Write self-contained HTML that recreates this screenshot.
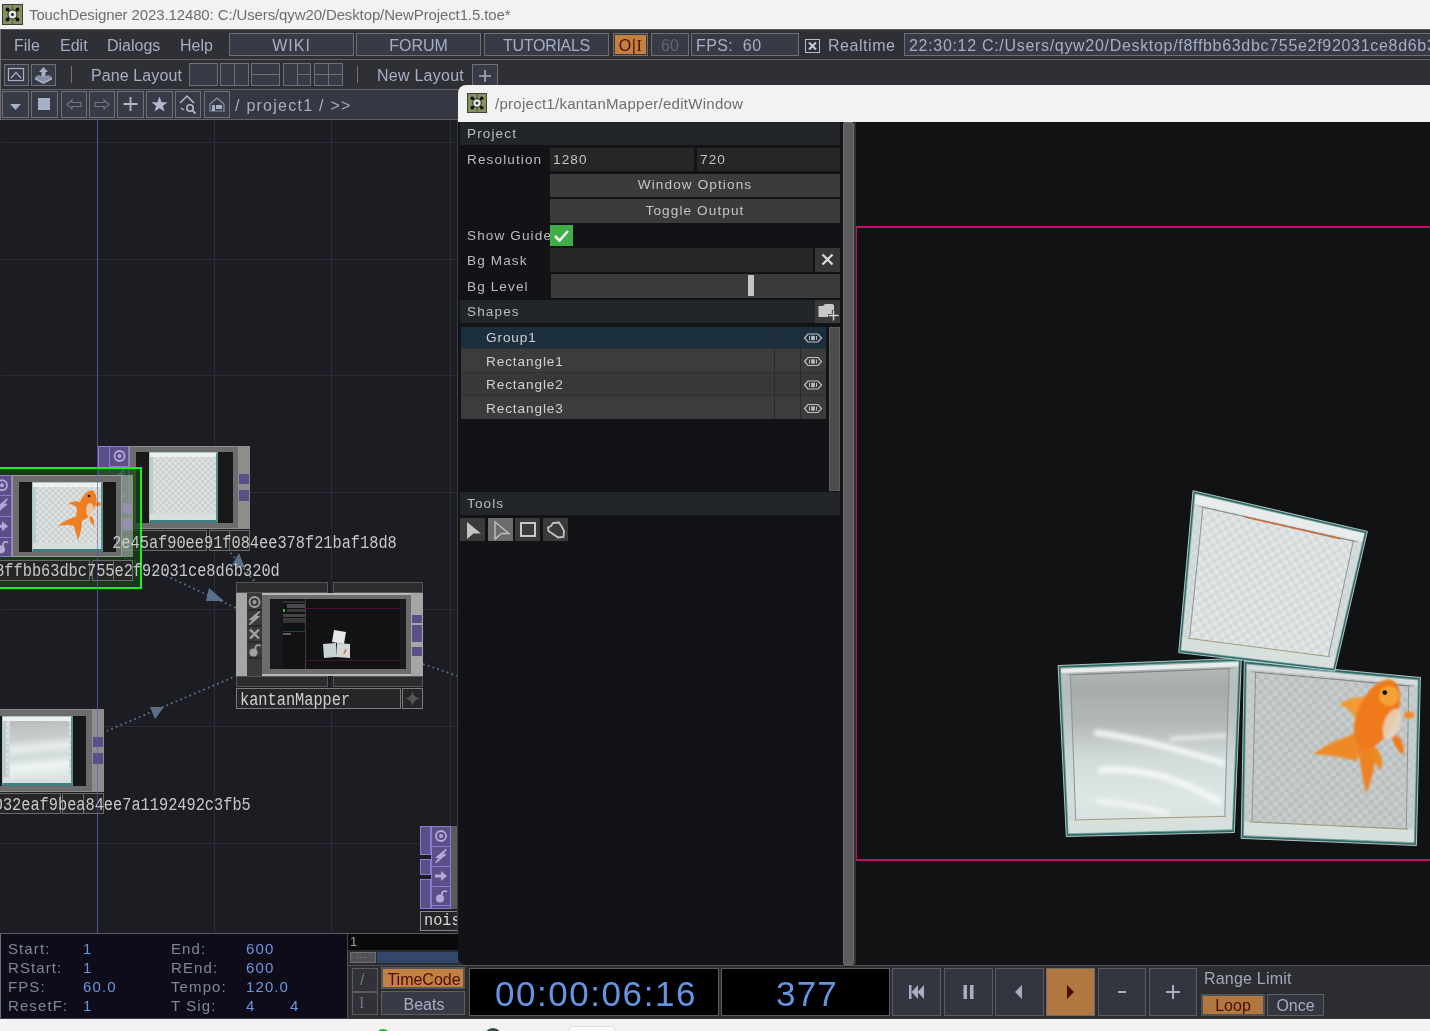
<!DOCTYPE html>
<html><head><meta charset="utf-8">
<style>
*{box-sizing:border-box;margin:0;padding:0}
html,body{width:1430px;height:1031px;overflow:hidden;background:#f2f2f2;font-family:"Liberation Sans",sans-serif}
.a{position:absolute}
.t{position:absolute;white-space:nowrap;line-height:1;will-change:transform}
.btn{position:absolute;background:#383b46;border:1px solid #6e7074}
.mono{font-family:"Liberation Mono",monospace}
.m{font-size:16px;color:#a6aec4}
.p{font-size:13.6px;letter-spacing:1.1px;color:#bcbcbc}
</style></head><body>
<!-- title bar -->
<svg class="a" style="left:2px;top:4px" width="21" height="21" viewBox="0 0 21 21">
<rect x="0.5" y="0.5" width="20" height="20" fill="#84925f" stroke="#3a3e32"/>
<rect x="9.75" y="1" width="1.5" height="19" fill="#5e6a44"/>
<path d="M5.5 5.5L15.5 15.5M15.5 5.5L5.5 15.5" stroke="#141810" stroke-width="1.6"/>
<circle cx="5.5" cy="5.5" r="1.9" fill="#0e100c"/><circle cx="15.5" cy="5.5" r="1.9" fill="#0e100c"/><circle cx="5.5" cy="15.5" r="1.9" fill="#0e100c"/><circle cx="15.5" cy="15.5" r="1.9" fill="#0e100c"/>
<circle cx="10.5" cy="10.5" r="5" fill="#2a3020"/><circle cx="10.5" cy="10.5" r="3.9" fill="#e8e8e8"/><circle cx="10.5" cy="10.5" r="1.6" fill="#333"/>
</svg>
<div class="t" style="left:29px;top:7px;font-size:15px;letter-spacing:-0.12px;color:#6e6e6e">TouchDesigner 2023.12480: C:/Users/qyw20/Desktop/NewProject1.5.toe*</div>

<!-- main dark area -->
<div class="a" style="left:0;top:29px;width:1430px;height:990px;background:#2e3035;border-top:1px solid #5a5c60;border-left:1px solid #707074;border-bottom:1px solid #505256"></div>
<!-- row1 menu -->
<div class="t m" style="left:14px;top:38px">File</div>
<div class="t m" style="left:60px;top:38px">Edit</div>
<div class="t m" style="left:107px;top:38px">Dialogs</div>
<div class="t m" style="left:180px;top:38px">Help</div>
<div class="btn" style="left:229px;top:33px;width:125px;height:23px"></div>
<div class="t m" style="left:229px;top:38px;width:125px;text-align:center;letter-spacing:1px">WIKI</div>
<div class="btn" style="left:356px;top:33px;width:125px;height:23px"></div>
<div class="t m" style="left:356px;top:38px;width:125px;text-align:center">FORUM</div>
<div class="btn" style="left:484px;top:33px;width:125px;height:23px"></div>
<div class="t m" style="left:484px;top:38px;width:125px;text-align:center;letter-spacing:-0.3px">TUTORIALS</div>
<div class="btn" style="left:613px;top:33px;width:35px;height:23px"></div>
<div class="a" style="left:615px;top:35px;width:31px;height:19px;background:#c4803f"></div>
<div class="t m" style="left:613px;top:38px;width:35px;text-align:center;color:#4a0e08;letter-spacing:0.5px">O|<span style="font-family:'Liberation Serif',serif">I</span></div>
<div class="btn" style="left:651px;top:33px;width:38px;height:23px"></div>
<div class="t m" style="left:651px;top:38px;width:38px;text-align:center;color:#60646e">60</div>
<div class="btn" style="left:691px;top:33px;width:108px;height:23px"></div>
<div class="t m" style="left:696px;top:38px;letter-spacing:0.4px">FPS:&nbsp;&nbsp;60</div>
<div class="a" style="left:805px;top:39px;width:15px;height:14px;border:1px solid #b8bccc"></div>
<svg class="a" style="left:805px;top:39px" width="15" height="14"><path d="M4 3.5L11 10.5M11 3.5L4 10.5" stroke="#c8ccd8" stroke-width="2"/></svg>
<div class="t m" style="left:828px;top:38px;letter-spacing:0.55px">Realtime</div>
<div class="btn" style="left:904px;top:33px;width:540px;height:23px"></div>
<div class="t m" style="left:909px;top:38px;letter-spacing:0.69px">22:30:12 C:/Users/qyw20/Desktop/f8ffbb63dbc755e2f92031ce8d6b320d</div>
<div class="a" style="left:1px;top:59px;width:1429px;height:1px;background:#606266"></div>

<!-- row2 -->
<div class="btn" style="left:4px;top:64px;width:25px;height:22px"></div>
<svg class="a" style="left:4px;top:64px" width="25" height="22"><rect x="4.5" y="4.5" width="15" height="12" fill="none" stroke="#a6aec4" stroke-width="1.2"/><path d="M7 14L12 8.5L17 14" fill="none" stroke="#a6aec4" stroke-width="1.2"/></svg>
<div class="btn" style="left:31px;top:64px;width:25px;height:22px"></div>
<svg class="a" style="left:31px;top:64px" width="25" height="22"><path d="M4 13L12.5 17.5L21 13L21 15.5L12.5 20L4 15.5Z" fill="#a6aec4"/><path d="M4 13L8 11L12.5 13.5L17 11L21 13L12.5 17.5Z" fill="#8890a6"/><path d="M12.5 3L17 8H14.5V13H10.5V8H8Z" fill="#a6aec4"/></svg>
<div class="a" style="left:71px;top:66px;width:1px;height:17px;background:#70747c"></div>
<div class="t m" style="left:91px;top:68px;letter-spacing:0.1px">Pane Layout</div>
<div class="btn" style="left:189px;top:63px;width:29px;height:23px"></div>
<div class="btn" style="left:220px;top:63px;width:29px;height:23px"></div>
<div class="a" style="left:234px;top:63px;width:1px;height:23px;background:#6e7074"></div>
<div class="btn" style="left:251px;top:63px;width:29px;height:23px"></div>
<div class="a" style="left:251px;top:74px;width:29px;height:1px;background:#6e7074"></div>
<div class="btn" style="left:283px;top:63px;width:28px;height:23px"></div>
<div class="a" style="left:297px;top:63px;width:1px;height:23px;background:#6e7074"></div>
<div class="a" style="left:297px;top:74px;width:14px;height:1px;background:#6e7074"></div>
<div class="btn" style="left:314px;top:63px;width:29px;height:23px"></div>
<div class="a" style="left:328px;top:63px;width:1px;height:23px;background:#6e7074"></div>
<div class="a" style="left:314px;top:74px;width:29px;height:1px;background:#6e7074"></div>
<div class="a" style="left:357px;top:66px;width:1px;height:17px;background:#70747c"></div>
<div class="t m" style="left:377px;top:68px;letter-spacing:0.25px">New Layout</div>
<div class="btn" style="left:472px;top:64px;width:26px;height:24px"></div>
<svg class="a" style="left:472px;top:64px" width="26" height="24"><path d="M13 6V18M7 12H19" stroke="#a6aec4" stroke-width="1.6"/></svg>
<div class="a" style="left:1px;top:89px;width:1429px;height:1px;background:#606266"></div>
<!-- row3 -->
<div class="a" style="left:1px;top:90px;width:1429px;height:29px;background:#353842"></div>
<div class="btn" style="left:2px;top:91px;width:27px;height:27px"></div>
<svg class="a" style="left:2px;top:91px" width="27" height="27"><path d="M8 13H19L13.5 19Z" fill="#a6b0c8"/></svg>
<div class="btn" style="left:31px;top:91px;width:27px;height:27px"></div>
<div class="a" style="left:38px;top:98px;width:12px;height:12px;background:#a6b0c8"></div>
<div class="btn" style="left:61px;top:91px;width:26px;height:27px"></div>
<svg class="a" style="left:61px;top:91px" width="26" height="27"><path d="M6 13.5L11 9V11.5H20V15.5H11V18Z" fill="none" stroke="#6e7488" stroke-width="1.2"/></svg>
<div class="btn" style="left:89px;top:91px;width:26px;height:27px"></div>
<svg class="a" style="left:89px;top:91px" width="26" height="27"><path d="M20 13.5L15 9V11.5H6V15.5H15V18Z" fill="none" stroke="#6e7488" stroke-width="1.2"/></svg>
<div class="btn" style="left:117px;top:91px;width:27px;height:27px"></div>
<svg class="a" style="left:117px;top:91px" width="27" height="27"><path d="M13.5 6V20M6.5 13H20.5" stroke="#b0b8cc" stroke-width="1.8"/></svg>
<div class="btn" style="left:146px;top:91px;width:27px;height:27px"></div>
<svg class="a" style="left:146px;top:91px" width="27" height="27"><path d="M13.5 5.5L15.6 11.2L21.5 11.3L16.8 14.9L18.5 20.5L13.5 17.2L8.5 20.5L10.2 14.9L5.5 11.3L11.4 11.2Z" fill="#b0b8cc"/></svg>
<div class="btn" style="left:175px;top:91px;width:26px;height:27px"></div>
<svg class="a" style="left:175px;top:91px" width="26" height="27"><path d="M5 12L12 5L19 12" fill="none" stroke="#b0b8cc" stroke-width="1.5"/><path d="M6 17L9 19" stroke="#b0b8cc" stroke-width="1.5"/><circle cx="15" cy="17" r="3.2" fill="none" stroke="#b0b8cc" stroke-width="1.6"/><path d="M17.3 19.3L20.5 22.5" stroke="#b0b8cc" stroke-width="1.8"/></svg>
<div class="btn" style="left:204px;top:91px;width:26px;height:27px"></div>
<svg class="a" style="left:204px;top:91px" width="26" height="27"><path d="M6 13L13 7L20 13V20H6Z" fill="none" stroke="#8a90a4" stroke-width="1.2"/><rect x="12" y="14" width="6" height="4" fill="#a6aec4"/><rect x="8" y="14" width="3" height="6" fill="#a6aec4"/></svg>
<div class="t m" style="left:235px;top:98px;letter-spacing:1.25px">/ project1 / &gt;&gt;</div>
<div class="a" style="left:1px;top:119px;width:1429px;height:1px;background:#606266"></div>
<div class="a" style="left:0;top:0;width:458px;height:933px;overflow:hidden">
<div class="a" style="left:0px;top:120px;width:458px;height:813px;background:#1c1d22"></div>
<div class="a" style="left:214px;top:120px;width:1px;height:813px;background:#2b2c37"></div>
<div class="a" style="left:331px;top:120px;width:1px;height:813px;background:#2b2c37"></div>
<div class="a" style="left:450px;top:120px;width:1px;height:813px;background:#2b2c37"></div>
<div class="a" style="left:1px;top:142px;width:457px;height:1px;background:#2b2c37"></div>
<div class="a" style="left:1px;top:259px;width:457px;height:1px;background:#2b2c37"></div>
<div class="a" style="left:1px;top:375px;width:457px;height:1px;background:#2b2c37"></div>
<div class="a" style="left:1px;top:492px;width:457px;height:1px;background:#2b2c37"></div>
<div class="a" style="left:1px;top:609px;width:457px;height:1px;background:#2b2c37"></div>
<div class="a" style="left:1px;top:726px;width:457px;height:1px;background:#2b2c37"></div>
<div class="a" style="left:1px;top:843px;width:457px;height:1px;background:#2b2c37"></div>
<div class="a" style="left:97px;top:120px;width:1px;height:813px;background:#45457a"></div>
<svg class="a" style="left:0;top:0" width="458" height="933">
<g stroke="#5a7088" stroke-width="1.8" stroke-dasharray="1.8 3.2" fill="none">
<path d="M125 557L236 608"/>
<path d="M208 526L262 590"/>
<path d="M102 733L236 676"/>
<path d="M423 664L458 676"/>
</g>
<g fill="#5a7088">
<path d="M209 588L224 601L206 601Z"/>
<path d="M239 553L245 568L232 565Z"/>
<path d="M150 707L164 707L155 719Z"/>
</g>
</svg>
<div class="a" style="left:-10px;top:709px;width:114px;height:83px;background:#6c6c6c;border:1px solid #8a8a8a"></div>
<div class="a" style="left:-10px;top:716px;width:96px;height:70px;background:#181818"></div>
<div class="a" style="left:2px;top:716px;width:71px;height:70px;background:repeating-conic-gradient(#dde1e1 0 25%, #ccd1d1 0 50%) 0 0/6px 6px;border:1px solid #a8c8c8;border-bottom:3px solid #3f7f7f;border-right:2px solid #5a9090;box-shadow:inset 0 4px 0 #eef0f0, inset 0 -6px 0 #d8dede, inset 3px 0 0 #c0cccc"></div>
<div class="a" style="left:10px;top:721px;width:59px;height:58px;background:linear-gradient(175deg,#b8bcbc 0%,#c8cccc 30%,#e6ecec 45%,#d2dada 60%,#eef4f4 75%,#d8e0e0 100%)"></div>
<div class="a" style="left:92px;top:709px;width:12px;height:83px;background:#8e8e8e"></div>
<div class="a" style="left:93px;top:737px;width:10px;height:10px;background:#5c4f88"></div>
<div class="a" style="left:93px;top:753px;width:10px;height:11px;background:#5c4f88"></div>
<div class="a" style="left:-10px;top:793px;width:71px;height:21px;background:#262628;border:1px solid #6a6a6a"></div>
<div class="a" style="left:62px;top:793px;width:42px;height:21px;background:#262628;border:1px solid #6a6a6a"></div>
<div class="a" style="left:83px;top:793px;width:1px;height:21px;background:#6a6a6a"></div>
<div class="t" style="left:-43px;top:797px;font-family:'Liberation Mono',monospace;font-size:15.3px;color:#c8c8c8;transform:scaleY(1.18);transform-origin:0 0">d6f9032eaf9bea84ee7a1192492c3fb5</div>
<div class="a" style="left:98px;top:446px;width:31px;height:83px;background:#5c4f88;border:1px solid #8c7ad8"></div>
<div class="a" style="left:109px;top:446px;width:1px;height:83px;background:#8c7ad8"></div>
<div class="a" style="left:109px;top:466px;width:20px;height:1px;background:#8c7ad8"></div>
<div class="a" style="left:109px;top:486px;width:20px;height:1px;background:#8c7ad8"></div>
<div class="a" style="left:109px;top:506px;width:20px;height:1px;background:#8c7ad8"></div>
<svg class="a" style="left:110px;top:446px" width="19" height="80"><circle cx="9.5" cy="10.0" r="5" fill="none" stroke="#b4a8d8" stroke-width="1.8"/><circle cx="9.5" cy="10.0" r="2" fill="#b4a8d8"/><path d="M14.5 23.5L5.0 31.5L9.0 31.0L4.5 36.5L14.0 28.5L10.0 29.0Z" fill="#b4a8d8" stroke="#b4a8d8" stroke-width="1.4" stroke-linejoin="round"/><path d="M3.5 48.5H9.5V45.0L15.5 50.0L9.5 55.0V51.5H3.5Z" fill="#b4a8d8"/><circle cx="8.5" cy="72.5" r="4" fill="#b4a8d8"/><path d="M10.5 69.0V67.0A3 3 0 0 1 15.5 66.0" fill="none" stroke="#b4a8d8" stroke-width="1.8"/></svg>
<div class="a" style="left:129px;top:446px;width:121px;height:83px;background:#6c6c6c;border:1px solid #909090"></div>
<div class="a" style="left:136px;top:452px;width:97px;height:71px;background:#181818"></div>
<div class="a" style="left:149px;top:452px;width:69px;height:71px;background:repeating-conic-gradient(#dde1e1 0 25%, #ccd1d1 0 50%) 0 0/6px 6px;border:1px solid #a8c8c8;border-bottom:3px solid #3f7f7f;border-right:2px solid #5a9090;box-shadow:inset 0 4px 0 #eef0f0, inset 0 -6px 0 #d8dede, inset 3px 0 0 #c0cccc"></div>
<div class="a" style="left:238px;top:446px;width:12px;height:83px;background:#8e8e8e"></div>
<div class="a" style="left:239px;top:474px;width:10px;height:10px;background:#5c4f88"></div>
<div class="a" style="left:239px;top:490px;width:10px;height:11px;background:#5c4f88"></div>
<div class="a" style="left:119px;top:530px;width:88px;height:21px;background:#262628;border:1px solid #6a6a6a"></div>
<div class="a" style="left:209px;top:530px;width:41px;height:21px;background:#262628;border:1px solid #6a6a6a"></div>
<div class="a" style="left:229px;top:530px;width:1px;height:21px;background:#6a6a6a"></div>
<div class="a" style="left:-10px;top:467px;width:152px;height:122px;background:rgba(20,70,20,0.7);border:2px solid #1cf01c"></div>
<div class="a" style="left:-5px;top:475px;width:17px;height:82px;background:#5c4f88;border:1px solid #8c7ad8"></div>
<div class="a" style="left:-5px;top:495px;width:17px;height:1px;background:#8c7ad8"></div>
<div class="a" style="left:-5px;top:516px;width:17px;height:1px;background:#8c7ad8"></div>
<div class="a" style="left:-5px;top:537px;width:17px;height:1px;background:#8c7ad8"></div>
<svg class="a" style="left:-8px;top:475px" width="20" height="82.0"><circle cx="10.0" cy="10.25" r="5" fill="none" stroke="#b4a8d8" stroke-width="1.8"/><circle cx="10.0" cy="10.25" r="2" fill="#b4a8d8"/><path d="M15.0 24.25L5.5 32.25L9.5 31.75L5.0 37.25L14.5 29.25L10.5 29.75Z" fill="#b4a8d8" stroke="#b4a8d8" stroke-width="1.4" stroke-linejoin="round"/><path d="M4.0 49.75H10.0V46.25L16.0 51.25L10.0 56.25V52.75H4.0Z" fill="#b4a8d8"/><circle cx="9.0" cy="74.25" r="4" fill="#b4a8d8"/><path d="M11.0 70.75V68.75A3 3 0 0 1 16.0 67.75" fill="none" stroke="#b4a8d8" stroke-width="1.8"/></svg>
<div class="a" style="left:12px;top:475px;width:110px;height:82px;background:#6c6c6c;border:1px solid #9a9a9a"></div>
<div class="a" style="left:19px;top:482px;width:97px;height:70px;background:#181818"></div>
<div class="a" style="left:32px;top:482px;width:71px;height:70px;background:repeating-conic-gradient(#dde1e1 0 25%, #ccd1d1 0 50%) 0 0/6px 6px;border:1px solid #a8c8c8;border-bottom:3px solid #3f7f7f;border-right:2px solid #5a9090;box-shadow:inset 0 4px 0 #eef0f0, inset 0 -6px 0 #d8dede, inset 3px 0 0 #c0cccc"></div>
<svg class="a" style="left:32px;top:482px" width="71" height="70"><g fill="#ee7e20"><path d="M60 8Q66 12 64 22Q60 34 52 38Q46 40 44 36Q44 26 50 16Q54 9 60 8Z"/><path d="M46 34Q36 36 26 44Q36 42 42 44Q44 52 46 58Q50 48 50 38Z"/><path d="M48 20Q42 18 36 22Q44 22 46 28Z"/><path d="M60 34Q63 40 62 44Q58 40 57 35Z"/></g><ellipse cx="58" cy="28" rx="4" ry="7" fill="#ead8c0" opacity="0.8"/><ellipse cx="66" cy="22" rx="3" ry="2" fill="#ee8a24"/><circle cx="57" cy="14" r="1.3" fill="#111"/></svg>
<div class="a" style="left:-5px;top:560px;width:95px;height:21px;background:#262628;border:1px solid #6a6a6a"></div>
<div class="a" style="left:92px;top:560px;width:41px;height:21px;background:#262628;border:1px solid #6a6a6a"></div>
<div class="a" style="left:113px;top:560px;width:1px;height:21px;background:#6a6a6a"></div>
<div class="t" style="left:-14px;top:563px;font-family:'Liberation Mono',monospace;font-size:15.3px;color:#c8c8c8;transform:scaleY(1.18);transform-origin:0 0">f8ffbb63dbc755e2f92031ce8d6b320d</div>
<div class="a" style="left:113px;top:530px;width:300px;height:22px;overflow:hidden">
<div class="t" style="left:-10px;top:5px;font-family:'Liberation Mono',monospace;font-size:15.3px;color:#c8c8c8;transform:scaleY(1.18);transform-origin:0 0">e2e45af90ee91f084ee378f21baf18d8</div>
</div>
<div class="a" style="left:123px;top:503px;width:9px;height:10px;background:#5c4f88"></div>
<div class="a" style="left:123px;top:518px;width:9px;height:12px;background:#5c4f88"></div>
<div class="a" style="left:122px;top:475px;width:11px;height:82px;background:rgba(210,210,210,0.5)"></div>
<div class="a" style="left:236px;top:582px;width:92px;height:11px;background:#2c2c2e;border:1px solid #555"></div>
<div class="a" style="left:333px;top:582px;width:90px;height:11px;background:#2c2c2e;border:1px solid #555"></div>
<div class="a" style="left:236px;top:593px;width:187px;height:83px;background:#a6a6a6"></div>
<div class="a" style="left:247px;top:593px;width:15px;height:83px;background:#3a3a3c"></div>
<svg class="a" style="left:247px;top:594px" width="15" height="64"><circle cx="7.5" cy="8.0" r="5" fill="none" stroke="#a0a0a0" stroke-width="1.8"/><circle cx="7.5" cy="8.0" r="2" fill="#a0a0a0"/><path d="M12.5 17.5L3.0 25.5L7.0 25.0L2.5 30.5L12.0 22.5L8.0 23.0Z" fill="#a0a0a0" stroke="#a0a0a0" stroke-width="1.4" stroke-linejoin="round"/><path d="M3.0 35.5L12.0 44.5M12.0 35.5L3.0 44.5" stroke="#a0a0a0" stroke-width="2.4"/><circle cx="6.5" cy="58.5" r="4" fill="#a0a0a0"/><path d="M8.5 55.0V53.0A3 3 0 0 1 13.5 52.0" fill="none" stroke="#a0a0a0" stroke-width="1.8"/></svg>
<div class="a" style="left:247px;top:609px;width:15px;height:2px;background:#2a2a2c"></div>
<div class="a" style="left:247px;top:625px;width:15px;height:2px;background:#2a2a2c"></div>
<div class="a" style="left:247px;top:641px;width:15px;height:2px;background:#2a2a2c"></div>
<div class="a" style="left:247px;top:657px;width:15px;height:2px;background:#2a2a2c"></div>
<div class="a" style="left:262px;top:593px;width:149px;height:83px;background:#6c6c6c;border-top:2px solid #b8b8b8;border-bottom:2px solid #b8b8b8"></div>
<div class="a" style="left:270px;top:599px;width:136px;height:70px;background:#111214"></div>
<div class="a" style="left:270px;top:599px;width:13px;height:70px;background:#17181b"></div>
<div class="a" style="left:283px;top:601px;width:22px;height:2px;background:#2e2f33"></div>
<div class="a" style="left:287px;top:604px;width:18px;height:4px;background:#4a4a4c"></div>
<div class="a" style="left:283px;top:609px;width:2px;height:3px;background:#3cb043"></div>
<div class="a" style="left:287px;top:609px;width:18px;height:3px;background:#3a3a3c"></div>
<div class="a" style="left:283px;top:614px;width:22px;height:3px;background:#444446"></div>
<div class="a" style="left:283px;top:618px;width:22px;height:3px;background:#3a3a3c"></div>
<div class="a" style="left:283px;top:621px;width:22px;height:2px;background:#333336"></div>
<div class="a" style="left:283px;top:631px;width:22px;height:1px;background:#2a3a44"></div>
<div class="a" style="left:283px;top:633px;width:8px;height:2px;background:#5a5a5a"></div>
<div class="a" style="left:305px;top:599px;width:1px;height:70px;background:#3c3c3e"></div>
<div class="a" style="left:306px;top:608px;width:94px;height:1px;background:#4a1038"></div>
<div class="a" style="left:306px;top:660px;width:94px;height:1px;background:#4a1038"></div>
<div class="a" style="left:400px;top:599px;width:6px;height:70px;background:#1a1b1d"></div>
<svg class="a" style="left:306px;top:599px" width="94" height="70"><polygon points="28,31 40,33 38,45 26,43" fill="#e4e8e8"/><polygon points="17,45 30,44 30,58 18,59" fill="#c8d2d2"/><polygon points="31,44 44,45 44,59 30,58" fill="#d4d8d8"/><path d="M40 50L38 55" stroke="#e07020" stroke-width="1.5"/></svg>
<div class="a" style="left:411px;top:593px;width:12px;height:83px;background:#a6a6a6"></div>
<div class="a" style="left:412px;top:615px;width:10px;height:8px;background:#5c4f88"></div>
<div class="a" style="left:412px;top:625px;width:10px;height:17px;background:#5c4f88"></div>
<div class="a" style="left:412px;top:647px;width:10px;height:9px;background:#5c4f88"></div>
<div class="a" style="left:236px;top:676px;width:92px;height:11px;background:#2c2c2e;border:1px solid #555"></div>
<div class="a" style="left:333px;top:676px;width:90px;height:11px;background:#2c2c2e;border:1px solid #555"></div>
<div class="a" style="left:236px;top:688px;width:165px;height:21px;background:#262628;border:1px solid #7a7a7a"></div>
<div class="a" style="left:402px;top:688px;width:21px;height:21px;background:#262628;border:1px solid #7a7a7a"></div>
<svg class="a" style="left:402px;top:688px" width="21" height="21"><path d="M10.5 3Q11.5 9.5 18 10.5Q11.5 11.5 10.5 18Q9.5 11.5 3 10.5Q9.5 9.5 10.5 3Z" fill="#555"/></svg>
<div class="t" style="left:240px;top:692px;font-family:'Liberation Mono',monospace;font-size:15.3px;color:#d0d0d0;transform:scaleY(1.18);transform-origin:0 0">kantanMapper</div>
<div class="a" style="left:420px;top:826px;width:11px;height:29px;background:#5c4f88;border:1px solid #8c7ad8"></div>
<div class="a" style="left:420px;top:859px;width:11px;height:16px;background:#5c4f88;border:1px solid #8c7ad8"></div>
<div class="a" style="left:420px;top:879px;width:11px;height:30px;background:#5c4f88;border:1px solid #8c7ad8"></div>
<div class="a" style="left:431px;top:826px;width:20px;height:83px;background:#5c4f88;border:1px solid #8c7ad8"></div>
<div class="a" style="left:431px;top:846px;width:20px;height:1px;background:#8c7ad8"></div>
<div class="a" style="left:431px;top:866px;width:20px;height:1px;background:#8c7ad8"></div>
<div class="a" style="left:431px;top:886px;width:20px;height:1px;background:#8c7ad8"></div>
<div class="a" style="left:431px;top:905px;width:20px;height:1px;background:#8c7ad8"></div>
<svg class="a" style="left:432px;top:826px" width="18" height="80"><circle cx="9.0" cy="10.0" r="5" fill="none" stroke="#b4a8d8" stroke-width="1.8"/><circle cx="9.0" cy="10.0" r="2" fill="#b4a8d8"/><path d="M14.0 23.5L4.5 31.5L8.5 31.0L4.0 36.5L13.5 28.5L9.5 29.0Z" fill="#b4a8d8" stroke="#b4a8d8" stroke-width="1.4" stroke-linejoin="round"/><path d="M3.0 48.5H9.0V45.0L15.0 50.0L9.0 55.0V51.5H3.0Z" fill="#b4a8d8"/><circle cx="8.0" cy="72.5" r="4" fill="#b4a8d8"/><path d="M10.0 69.0V67.0A3 3 0 0 1 15.0 66.0" fill="none" stroke="#b4a8d8" stroke-width="1.8"/></svg>
<div class="a" style="left:451px;top:826px;width:8px;height:83px;background:#5a5a5a"></div>
<div class="a" style="left:420px;top:911px;width:45px;height:20px;background:#262628;border:1px solid #8a8a8a"></div>
<div class="t" style="left:424px;top:913px;font-family:'Liberation Mono',monospace;font-size:15.3px;color:#d8d8d8;transform:scaleY(1.1);transform-origin:0 0">noise1</div>
<div class="a" style="left:97px;top:120px;width:1px;height:813px;background:rgba(90,90,170,0.55)"></div>
<div class="a" style="left:457px;top:120px;width:1px;height:813px;background:#3c3d42"></div>
</div><!-- timeline -->
<div class="a" style="left:0;top:933px;width:460px;height:1px;background:#5a5c60"></div>
<div class="a" style="left:1px;top:934px;width:346px;height:84px;background:#0d0c18"></div>
<div class="t" style="left:8px;top:939px;font-size:15px;letter-spacing:1.1px;color:#7e8898;line-height:19px">Start:<br>RStart:<br>FPS:<br>ResetF:</div>
<div class="t" style="left:83px;top:939px;font-size:15px;letter-spacing:1.1px;color:#6e96e0;line-height:19px">1<br>1<br>60.0<br>1</div>
<div class="t" style="left:171px;top:939px;font-size:15px;letter-spacing:1.1px;color:#7e8898;line-height:19px">End:<br>REnd:<br>Tempo:<br>T Sig:</div>
<div class="t" style="left:246px;top:939px;font-size:15px;letter-spacing:1.1px;color:#6e96e0;line-height:19px">600<br>600<br>120.0<br>4</div>
<div class="t" style="left:290px;top:996px;font-size:15px;letter-spacing:1.1px;color:#6e96e0;line-height:19px">4</div>
<div class="a" style="left:347px;top:934px;width:111px;height:16px;background:#0a0a0a;border-left:1px solid #444"></div>
<div class="t" style="left:350px;top:935px;font-size:13px;color:#a0a0a0">1</div>
<div class="a" style="left:347px;top:950px;width:111px;height:15px;background:#2a2b30;border-left:1px solid #555"></div>
<div class="a" style="left:350px;top:952px;width:26px;height:11px;background:#505258;border:1px solid #707070"></div>
<div class="t" style="left:356px;top:950px;font-size:10px;color:#8a8a8a;letter-spacing:1px">...</div>
<div class="a" style="left:377px;top:952px;width:81px;height:11px;background:#33466c"></div>
<!-- control row -->
<div class="a" style="left:347px;top:965px;width:1083px;height:53px;background:#2c2d31;border-top:1px solid #505256;border-left:1px solid #505256"></div>
<div class="a" style="left:0;top:1018px;width:1430px;height:1px;background:#3a3b3f"></div>
<div class="btn" style="left:352px;top:968px;width:26px;height:24px;background:#303238;border-color:#5a5c62"></div>
<div class="btn" style="left:352px;top:992px;width:26px;height:23px;background:#303238;border-color:#5a5c62"></div>
<div class="t" style="left:360px;top:972px;font-size:16px;color:#6e7280">/</div>
<div class="t" style="left:359px;top:995px;font-size:16px;color:#6e7280;font-family:'Liberation Serif',serif">I</div>
<div class="btn" style="left:381px;top:967px;width:84px;height:22px;background:#c4803f;border:2px solid #545660"></div>
<div class="t" style="left:382px;top:972px;width:84px;text-align:center;font-size:16px;color:#4a0e08">TimeCode</div>
<div class="btn" style="left:381px;top:991px;width:84px;height:24px;background:#383b46;border-color:#5e6066"></div>
<div class="t" style="left:382px;top:997px;width:84px;text-align:center;font-size:16px;color:#a6aec4">Beats</div>
<div class="a" style="left:469px;top:968px;width:250px;height:48px;background:#000;border:1px solid #5a5a5a"></div>
<div class="t" style="left:495px;top:976px;font-size:35px;letter-spacing:1.55px;color:#6494e2">00:00:06:16</div>
<div class="a" style="left:721px;top:968px;width:169px;height:48px;background:#000;border:1px solid #5a5a5a"></div>
<div class="t" style="left:776px;top:976px;font-size:35px;letter-spacing:1.2px;color:#6494e2">377</div>
<div class="btn" style="left:892px;top:968px;width:49px;height:48px;background:#33363f;border-color:#5a5c62"></div>
<svg class="a" style="left:892px;top:968px" width="49" height="48"><rect x="17" y="17" width="2.5" height="14" fill="#a6aec4"/><path d="M19.5 24L26 17V31Z M25.5 24L32 17V31Z" fill="#a6aec4"/></svg>
<div class="btn" style="left:944px;top:968px;width:49px;height:48px;background:#33363f;border-color:#5a5c62"></div>
<svg class="a" style="left:944px;top:968px" width="49" height="48"><rect x="19.5" y="17" width="3.5" height="14" fill="#a6aec4"/><rect x="26" y="17" width="3.5" height="14" fill="#a6aec4"/></svg>
<div class="btn" style="left:995px;top:968px;width:49px;height:48px;background:#33363f;border-color:#5a5c62"></div>
<svg class="a" style="left:995px;top:968px" width="49" height="48"><path d="M20 24L27 17V31Z" fill="#a6aec4"/></svg>
<div class="btn" style="left:1046px;top:968px;width:49px;height:48px;background:#b07840;border-color:#6e6a66"></div>
<svg class="a" style="left:1046px;top:968px" width="49" height="48"><path d="M28 24L21 17V31Z" fill="#4a0e08"/></svg>
<div class="btn" style="left:1098px;top:968px;width:48px;height:48px;background:#33363f;border-color:#5a5c62"></div>
<div class="a" style="left:1118px;top:991px;width:8px;height:2px;background:#a6aec4"></div>
<div class="btn" style="left:1149px;top:968px;width:48px;height:48px;background:#33363f;border-color:#5a5c62"></div>
<svg class="a" style="left:1149px;top:968px" width="48" height="48"><path d="M24 17V31M17 24H31" stroke="#a6aec4" stroke-width="2"/></svg>
<div class="t" style="left:1204px;top:971px;font-size:16px;letter-spacing:0.2px;color:#a0a8bc">Range Limit</div>
<div class="btn" style="left:1201px;top:994px;width:64px;height:22px;background:#b07840;border:2px solid #505258"></div>
<div class="t" style="left:1201px;top:998px;width:64px;text-align:center;font-size:16px;color:#4a0e08">Loop</div>
<div class="btn" style="left:1267px;top:994px;width:57px;height:22px;background:#33363f;border-color:#5e6066"></div>
<div class="t" style="left:1267px;top:998px;width:57px;text-align:center;font-size:16px;color:#a6aec4">Once</div>
<div class="a" style="left:376px;top:1029px;width:14px;height:14px;border-radius:50%;background:#2aa83a"></div>
<div class="a" style="left:484px;top:1028px;width:18px;height:18px;border-radius:50%;background:#3a4a3a"></div>
<div class="a" style="left:568px;top:1026px;width:48px;height:12px;border-radius:5px;background:#fafafa;border:1px solid #dcdcdc"></div>
<!-- popup window -->
<div class="a" style="left:458px;top:85px;width:990px;height:880px;background:#121316;border-radius:8px 0 0 8px;overflow:hidden">
  <div class="a" style="left:0;top:0;width:990px;height:37px;background:#f2f2f2"></div>
</div>
<svg class="a" style="left:467px;top:93px" width="20" height="20" viewBox="0 0 21 21">
<rect x="0.5" y="0.5" width="20" height="20" fill="#84925f" stroke="#3a3e32"/>
<rect x="9.75" y="1" width="1.5" height="19" fill="#5e6a44"/>
<path d="M5.5 5.5L15.5 15.5M15.5 5.5L5.5 15.5" stroke="#141810" stroke-width="1.6"/>
<circle cx="5.5" cy="5.5" r="1.9" fill="#0e100c"/><circle cx="15.5" cy="5.5" r="1.9" fill="#0e100c"/><circle cx="5.5" cy="15.5" r="1.9" fill="#0e100c"/><circle cx="15.5" cy="15.5" r="1.9" fill="#0e100c"/>
<circle cx="10.5" cy="10.5" r="5" fill="#2a3020"/><circle cx="10.5" cy="10.5" r="3.9" fill="#e8e8e8"/><circle cx="10.5" cy="10.5" r="1.6" fill="#333"/>
</svg>
<div class="t" style="left:495px;top:96px;font-size:15px;letter-spacing:0.27px;color:#6e6e6e">/project1/kantanMapper/editWindow</div>
<!-- left panel -->
<div class="a" style="left:460px;top:122px;width:380px;height:23px;background:#22262b"></div>
<div class="t p" style="left:467px;top:127px">Project</div>
<div class="t p" style="left:467px;top:153px">Resolution</div>
<div class="a" style="left:550px;top:148px;width:144px;height:23px;background:#262626"></div>
<div class="a" style="left:697px;top:148px;width:143px;height:23px;background:#262626"></div>
<div class="t p" style="left:553px;top:153px;color:#c4c4c4">1280</div>
<div class="t p" style="left:700px;top:153px;color:#c4c4c4">720</div>
<div class="a" style="left:550px;top:174px;width:290px;height:23px;background:#3b3b3b"></div>
<div class="t p" style="left:550px;top:178px;width:290px;text-align:center;color:#c4c4c4">Window Options</div>
<div class="a" style="left:550px;top:199px;width:290px;height:24px;background:#3b3b3b"></div>
<div class="t p" style="left:550px;top:204px;width:290px;text-align:center;color:#c4c4c4">Toggle Output</div>
<div class="a" style="left:460px;top:225px;width:90px;height:21px;overflow:hidden"><div class="t p" style="left:7px;top:4px">Show Guide</div></div>
<div class="a" style="left:550px;top:225px;width:23px;height:21px;background:#3fae46"></div>
<svg class="a" style="left:550px;top:225px" width="23" height="21"><path d="M5 11L9.5 15.5L18 6" fill="none" stroke="#f0f0f0" stroke-width="2.6"/></svg>
<div class="t p" style="left:467px;top:254px">Bg Mask</div>
<div class="a" style="left:550px;top:248px;width:263px;height:24px;background:#262626"></div>
<div class="a" style="left:815px;top:248px;width:25px;height:24px;background:#363636"></div>
<svg class="a" style="left:815px;top:248px" width="25" height="24"><path d="M7.5 6.5L17.5 16.5M17.5 6.5L7.5 16.5" stroke="#d8d8d8" stroke-width="2.4"/></svg>
<div class="t p" style="left:467px;top:280px">Bg Level</div>
<div class="a" style="left:551px;top:274px;width:289px;height:24px;background:#3a3a3a"></div>
<div class="a" style="left:748px;top:275px;width:6px;height:21px;background:#c4c4c4"></div>
<div class="a" style="left:460px;top:300px;width:380px;height:23px;background:#22262b"></div>
<div class="t p" style="left:467px;top:305px">Shapes</div>
<div class="a" style="left:815px;top:300px;width:25px;height:23px;background:#3a3a3a"></div>
<svg class="a" style="left:815px;top:300px" width="25" height="23"><path d="M3.5 6H8L10 4H17Q19 4 19 6V17H3.5Z" fill="#c8c8c8"/><path d="M18.5 10V21M13 15.5H24" stroke="#3a3a3a" stroke-width="3.2"/><path d="M18.5 10.5V20.5M13.5 15.5H23.5" stroke="#d8d8d8" stroke-width="1.4"/></svg>
<!-- list -->
<div class="a" style="left:461px;top:327px;width:365px;height:21px;background:#1b2f3c"></div>
<div class="a" style="left:461px;top:348px;width:365px;height:24px;background:#3c3c3c;border-top:1px solid #303030"></div>
<div class="a" style="left:461px;top:372px;width:365px;height:23px;background:#383838;border-top:1px solid #303030"></div>
<div class="a" style="left:461px;top:395px;width:365px;height:24px;background:#3c3c3c;border-top:1px solid #303030"></div>
<div class="a" style="left:774px;top:327px;width:1px;height:92px;background:#2a2a2a"></div>
<div class="a" style="left:800px;top:327px;width:1px;height:92px;background:#2a2a2a"></div>
<div class="t p" style="left:486px;top:331px;color:#d0d0d0;letter-spacing:0.9px">Group1</div>
<div class="t p" style="left:486px;top:355px;color:#d0d0d0;letter-spacing:0.9px">Rectangle1</div>
<div class="t p" style="left:486px;top:378px;color:#d0d0d0;letter-spacing:0.9px">Rectangle2</div>
<div class="t p" style="left:486px;top:402px;color:#d0d0d0;letter-spacing:0.9px">Rectangle3</div>
<svg class="a" style="left:803px;top:331px" width="20" height="86"><g fill="none" stroke="#c0c0c0" stroke-width="1.2"><path d="M1.5 7L5 3H15L18.5 7L15 11H5Z"/><path d="M6.5 5V9M13.5 5V9" stroke-width="1"/><rect x="8.2" y="4.8" width="3.6" height="4.4" fill="#bcbcbc" stroke="none"/><path d="M1.5 30.5L5 26.5H15L18.5 30.5L15 34.5H5Z"/><path d="M6.5 28.5V32.5M13.5 28.5V32.5" stroke-width="1"/><rect x="8.2" y="28.3" width="3.6" height="4.4" fill="#bcbcbc" stroke="none"/><path d="M1.5 54L5 50H15L18.5 54L15 58H5Z"/><path d="M6.5 52V56M13.5 52V56" stroke-width="1"/><rect x="8.2" y="51.8" width="3.6" height="4.4" fill="#bcbcbc" stroke="none"/><path d="M1.5 77.5L5 73.5H15L18.5 77.5L15 81.5H5Z"/><path d="M6.5 75.5V79.5M13.5 75.5V79.5" stroke-width="1"/><rect x="8.2" y="75.3" width="3.6" height="4.4" fill="#bcbcbc" stroke="none"/></g></svg>
<div class="a" style="left:829px;top:327px;width:11px;height:164px;background:#4c4c4c;border:1px solid #5e5e5e"></div>
<div class="a" style="left:460px;top:492px;width:380px;height:23px;background:#22262b"></div>
<div class="t p" style="left:467px;top:497px">Tools</div>
<div class="a" style="left:460px;top:518px;width:25px;height:23px;background:#3a3a3a"></div>
<svg class="a" style="left:460px;top:518px" width="25" height="23"><path d="M7 4L21 15.5L13.5 15.5L7 21Z" fill="#c4c4c4"/></svg>
<div class="a" style="left:488px;top:518px;width:25px;height:23px;background:#6c6c6c"></div>
<svg class="a" style="left:488px;top:518px" width="25" height="23"><path d="M7 4L21 15.5L13.5 15.5L7 21Z" fill="none" stroke="#c4c4c4" stroke-width="1.3"/></svg>
<div class="a" style="left:515px;top:518px;width:25px;height:23px;background:#3a3a3a"></div>
<div class="a" style="left:520px;top:522px;width:16px;height:15px;border:2.5px solid #c8c8c8"></div>
<div class="a" style="left:543px;top:518px;width:25px;height:23px;background:#3a3a3a"></div>
<svg class="a" style="left:543px;top:518px" width="25" height="23"><path d="M10 5L16 4.5L19 9L21 13L20.5 19L15 19.5L10 16L5.5 13L5 9.5L8 8Z" fill="none" stroke="#c4c4c4" stroke-width="1.8"/></svg>
<!-- scrollbar -->
<div class="a" style="left:843px;top:122px;width:11px;height:843px;background:#5c5c5c;border:1px solid #6e6e6e;border-radius:2px"></div>
<div class="a" style="left:854px;top:122px;width:2px;height:843px;background:#303030"></div>
<!-- viewer -->
<div class="a" style="left:856px;top:122px;width:590px;height:843px;background:#111214;overflow:hidden" id="viewer">
  <div class="a" style="left:0;top:104px;width:590px;height:2px;background:#c0106a"></div>
  <div class="a" style="left:0;top:737px;width:590px;height:2px;background:#c0106a"></div>
  <div class="a" style="left:0;top:104px;width:1px;height:635px;background:#c0106a"></div>
<svg class="a" style="left:0;top:0" width="590" height="843"><defs><pattern id="chkL" width="10" height="10" patternUnits="userSpaceOnUse" patternTransform="rotate(13)"><rect width="10" height="10" fill="#e2e6e6"/><rect width="5" height="5" fill="#d4d9d9"/><rect x="5" y="5" width="5" height="5" fill="#d4d9d9"/></pattern><pattern id="chkG" width="10" height="10" patternUnits="userSpaceOnUse" patternTransform="rotate(5)"><rect width="10" height="10" fill="#c8cccc"/><rect width="5" height="5" fill="#babfbf"/><rect x="5" y="5" width="5" height="5" fill="#babfbf"/></pattern><linearGradient id="wat" x1="0" y1="0" x2="0" y2="1"><stop offset="0" stop-color="#b8bcbc"/><stop offset="0.15" stop-color="#a6abab"/><stop offset="0.35" stop-color="#b2b7b7"/><stop offset="0.55" stop-color="#d2d9d9"/><stop offset="0.8" stop-color="#dfe6e6"/><stop offset="1" stop-color="#d6dddd"/></linearGradient><filter id="bl1"><feGaussianBlur stdDeviation="0.8"/></filter><filter id="bl2"><feGaussianBlur stdDeviation="2"/></filter></defs><polygon points="202.1,543.5 385.4,536.3 378.3,710.5 210.3,714.5" fill="#2f6a68" stroke="#d8e4e4" stroke-width="0.8"/><polygon points="204.2,545.6 383.3,538.6 376.5,708.3 212.0,712.2" fill="#86acaa" /><polygon points="205.2,546.8 382.3,539.9 375.7,707.1 212.8,711.0" fill="url(#wat)" /><g filter="url(#bl2)" fill="none" stroke="#f2f7f7" stroke-linecap="round"><path d="M240.8 610.7Q294.0 618.2 367.2 641.2" stroke-width="6"/><path d="M245.4 648.4Q302.8 643.6 362.5 679.6" stroke-width="7"/><path d="M242.9 679.4Q277.2 681.3 311.2 691.3" stroke-width="5"/><path d="M315.2 616.9L369.9 613.4" stroke-width="3"/></g><polygon points="205.2,546.8 382.3,539.9 382.2,544.3 205.4,551.1" fill="#e8ecec" /><line x1="209.9" y1="553.0" x2="377.7" y2="546.5" stroke="#7a8684" stroke-width="1.1" /><polygon points="205.4,551.1 213.4,550.8 219.8,700.6 212.4,700.8" fill="#c8d2d2" opacity="0.45"/><polygon points="374.1,544.6 382.2,544.3 376.2,696.6 368.7,696.8" fill="#c8d2d2" opacity="0.45"/><line x1="214.4" y1="552.4" x2="219.7" y2="697.1" stroke="#8a9694" stroke-width="1" /><line x1="373.1" y1="546.3" x2="368.8" y2="693.3" stroke="#8a9694" stroke-width="1" /><polygon points="212.2,698.2 376.3,694.0 375.7,707.1 212.8,711.0" fill="#d8e0de" /><line x1="218.0" y1="698.0" x2="370.5" y2="694.2" stroke="#a09c80" stroke-width="1.1" /><polygon points="388.3,539.0 564.4,555.5 560.4,723.5 385.2,716.4" fill="#2f6a68" stroke="#d8e4e4" stroke-width="0.8"/><polygon points="390.2,541.5 562.4,557.5 558.5,721.2 387.2,714.2" fill="#86acaa" /><polygon points="391.1,542.8 561.5,558.6 557.7,720.0 388.1,713.0" fill="url(#chkG)" /><polygon points="391.1,542.8 561.5,558.6 561.4,562.8 391.0,547.2" fill="#d8dcdc" /><line x1="395.2" y1="549.8" x2="557.1" y2="564.4" stroke="#7a8684" stroke-width="1.1" /><polygon points="391.0,547.2 398.7,547.9 396.0,702.7 388.3,702.3" fill="#c8d2d2" opacity="0.45"/><polygon points="553.7,562.1 561.4,562.8 557.9,709.9 550.2,709.6" fill="#c8d2d2" opacity="0.45"/><line x1="399.6" y1="549.8" x2="396.0" y2="699.1" stroke="#8a9694" stroke-width="1" /><line x1="552.7" y1="563.7" x2="550.3" y2="706.2" stroke="#8a9694" stroke-width="1" /><polygon points="388.3,699.7 558.0,707.4 557.7,720.0 388.1,713.0" fill="#d8e0de" /><line x1="394.3" y1="699.9" x2="552.0" y2="707.1" stroke="#a09c80" stroke-width="1.1" /><polygon points="337.0,368.7 511.4,409.4 478.8,549.0 322.7,530.6" fill="#2f6a68" stroke="#d8e4e4" stroke-width="0.8"/><polygon points="338.7,371.2 509.1,410.8 477.5,547.0 324.6,528.7" fill="#86acaa" /><polygon points="339.5,372.6 508.0,411.5 476.9,545.9 325.5,527.7" fill="url(#chkL)" /><polygon points="339.5,372.6 508.0,411.5 506.2,419.2 338.7,381.5" fill="#e8ecec" /><line x1="342.7" y1="384.3" x2="501.7" y2="420.0" stroke="#7a8684" stroke-width="1.1" /><polygon points="338.7,381.5 346.3,383.2 333.3,518.9 326.4,518.0" fill="#c8d2d2" opacity="0.45"/><polygon points="498.6,417.5 506.2,419.2 478.9,537.5 472.0,536.6" fill="#c8d2d2" opacity="0.45"/><line x1="347.0" y1="385.0" x2="333.6" y2="515.6" stroke="#8a9694" stroke-width="1" /><line x1="497.4" y1="418.7" x2="472.6" y2="533.8" stroke="#8a9694" stroke-width="1" /><polygon points="326.6,515.5 479.4,535.4 476.9,545.9 325.5,527.7" fill="#d8e0de" /><line x1="332.0" y1="516.2" x2="474.0" y2="534.7" stroke="#a09c80" stroke-width="1.1" /><line x1="389.3" y1="395.0" x2="484.2" y2="416.8" stroke="#d26a3c" stroke-width="1.4" /><g filter="url(#bl1)">
<path d="M508 610Q484 614 457 632Q478 633 501 639Z" fill="#ee8a26"/>
<path d="M501 620Q505 648 510 672Q521 648 519 620Z" fill="#ec8222"/>
<path d="M515 575Q498 573 483 582Q498 588 505 606Z" fill="#f29a34"/>
<ellipse cx="521" cy="592" rx="19" ry="37" transform="rotate(25 521 592)" fill="#ee7a1c"/>
<ellipse cx="536" cy="602" rx="8" ry="16" transform="rotate(20 536 602)" fill="#e6d6c2" opacity="0.85"/>
<ellipse cx="533" cy="574" rx="10" ry="10" fill="#f4a234"/>
<path d="M541 613Q550 622 547 633Q539 627 536 615Z" fill="#ee7a1c"/>
<path d="M521 626Q528 636 525 648Q516 640 514 627Z" fill="#ee8a22"/>
<ellipse cx="553" cy="593" rx="5.5" ry="3.5" fill="#ef8a24"/>
</g>
<circle cx="528.8" cy="570.6" r="2.4" fill="#141010"/></svg>
</div>
</body></html>
